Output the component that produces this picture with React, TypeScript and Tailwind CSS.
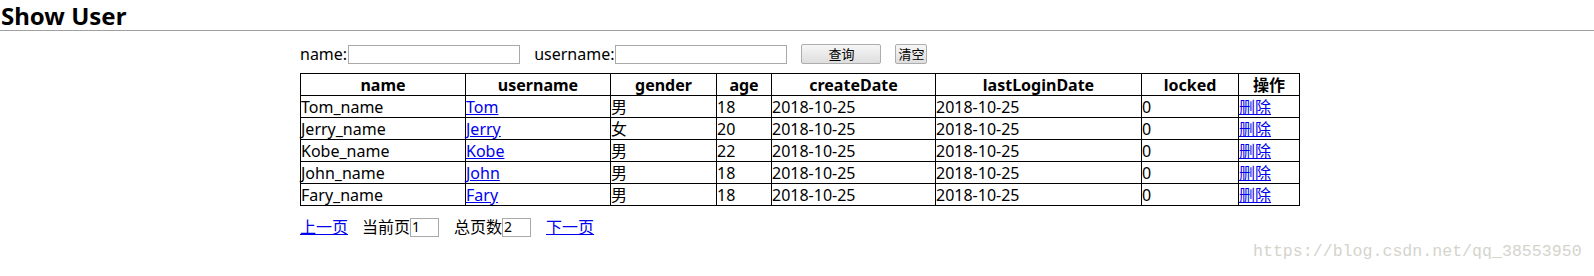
const users = [
  { name: "Tom_name", username: "Tom", gender: "男", age: 18 },
  { name: "Jerry_name", username: "Jerry", gender: "女", age: 20 },
  { name: "Kobe_name", username: "Kobe", gender: "男", age: 22 },
  { name: "John_name", username: "John", gender: "男", age: 18 },
  { name: "Fary_name", username: "Fary", gender: "男", age: 18 },
];

const font = { fontFamily: '"Noto Sans", "Noto Sans CJK SC", sans-serif' };

export default function App() {
  return (
    <div className="relative h-[276px] w-[1594px] overflow-hidden bg-white text-[16px] text-black" style={font}>
      <h2 className="h-[30px] pl-px pt-[1px] text-[24px] font-bold leading-[29px]">Show User</h2>
      <div className="h-px bg-[#a0a0a0]" />

      <div className="ml-[300px] w-[1000px]">
        {/* search form */}
        <div className="mt-[12px] flex h-[22px] items-center leading-[22px]">
          <span>name:</span>
          <input className="ml-[1px] h-[19px] w-[172px] border border-[#a9a9a9]" />
          <span className="ml-[14px]">username:</span>
          <input className="ml-[1px] h-[19px] w-[172px] border border-[#a9a9a9]" />
          <button className="ml-[14px] h-[20px] w-[80px] rounded-[2px] border border-[#adadad] bg-gradient-to-b from-[#f6f6f6] to-[#dedede] text-[13px] leading-[18px]">
            查询
          </button>
          <button className="ml-[14px] h-[20px] w-[32px] rounded-[2px] border border-[#adadad] bg-gradient-to-b from-[#f6f6f6] to-[#dedede] text-[13px] leading-[18px]">
            清空
          </button>
        </div>

        {/* user table */}
        <table className="mt-[8px] w-[999px] table-fixed border-collapse border border-black">
          <colgroup>
            <col className="w-[165px]" />
            <col className="w-[145px]" />
            <col className="w-[106px]" />
            <col className="w-[55px]" />
            <col className="w-[164px]" />
            <col className="w-[206px]" />
            <col className="w-[97px]" />
            <col className="w-[61px]" />
          </colgroup>
          <thead>
            <tr className="h-[22px]">
              {["name", "username", "gender", "age", "createDate", "lastLoginDate", "locked", "操作"].map((h) => (
                <th key={h} className="border border-black p-0 text-center font-bold leading-[20px]">
                  {h}
                </th>
              ))}
            </tr>
          </thead>
          <tbody>
            {users.map((u) => (
              <tr key={u.username} className="h-[22px]">
                <td className="border border-black p-0 leading-[20px]">{u.name}</td>
                <td className="border border-black p-0 leading-[20px]">
                  <a href="#" className="text-[#0000ee] underline">{u.username}</a>
                </td>
                <td className="border border-black p-0 leading-[20px]">{u.gender}</td>
                <td className="border border-black p-0 leading-[20px]">{u.age}</td>
                <td className="border border-black p-0 leading-[20px]">2018-10-25</td>
                <td className="border border-black p-0 leading-[20px]">2018-10-25</td>
                <td className="border border-black p-0 leading-[20px]">0</td>
                <td className="border border-black p-0 leading-[20px]">
                  <a href="#" className="text-[#0000ee] underline">删除</a>
                </td>
              </tr>
            ))}
          </tbody>
        </table>

        {/* pager */}
        <div className="mt-[10px] flex h-[22px] items-center leading-[22px]">
          <a href="#" className="text-[#0000ee] underline">上一页</a>
          <span className="ml-[14px]">当前页</span>
          <input defaultValue="1" className="h-[19px] w-[29px] border border-[#a9a9a9] px-[1px] text-[14px]" />
          <span className="ml-[15px]">总页数</span>
          <input defaultValue="2" className="h-[19px] w-[29px] border border-[#a9a9a9] px-[1px] text-[14px]" />
          <a href="#" className="ml-[15px] text-[#0000ee] underline">下一页</a>
        </div>
      </div>

      <div
        className="absolute left-[1253px] top-[241px] text-[16.6px] leading-[22px] text-[#d4d4cc]"
        style={{ fontFamily: '"Liberation Mono", monospace' }}
      >
        https://blog.csdn.net/qq_38553950
      </div>
    </div>
  );
}
